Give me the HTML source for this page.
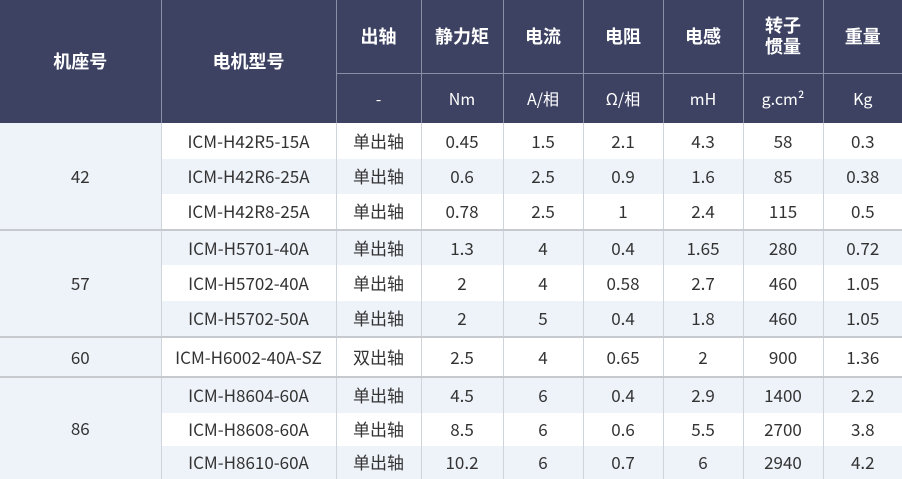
<!DOCTYPE html>
<html><head><meta charset="utf-8"><style>
body{margin:0;width:902px;height:478px;overflow:hidden;background:#fff;font-family:"Noto Sans CJK SC","Liberation Sans",sans-serif;}
table{border-collapse:collapse;table-layout:fixed;width:902px;}
td,th{padding:0;text-align:center;vertical-align:middle;}
th{background:#3d4263;color:#fff;font-weight:bold;font-size:18px;border-left:1px solid #8a8fa6;border-bottom:1px solid #8a8fa6;}
th.s{font-weight:normal;font-size:16px;height:49px;}
th.first{border-left:none}
td{font-size:17px;color:#333;border-left:1px solid #cfd3da;line-height:20px;overflow:hidden;}
tr.g td{background:#eef2f9}
td.grp{background:#eef2f9 !important;border-left:none}
tr.top td{border-top:2px solid #c6c9ce;}
</style></head><body>
<table>
<colgroup><col style="width:161px"><col style="width:175px"><col style="width:85px"><col style="width:82px"><col style="width:80px"><col style="width:80px"><col style="width:80px"><col style="width:80px"><col style="width:79px"></colgroup>
<tr style="height:73px"><th rowspan="2" class="first" style="border-bottom:none">机座号</th><th rowspan="2" style="border-bottom:none">电机型号</th><th>出轴</th><th>静力矩</th><th>电流</th><th>电阻</th><th>电感</th><th style="line-height:21px">转子<br>惯量</th><th>重量</th></tr>
<tr><th class="s" style="border-bottom:none">-</th><th class="s" style="border-bottom:none">Nm</th><th class="s" style="border-bottom:none">A/相</th><th class="s" style="border-bottom:none">Ω/相</th><th class="s" style="border-bottom:none">mH</th><th class="s" style="border-bottom:none">g.cm²</th><th class="s" style="border-bottom:none">Kg</th></tr>
<tr style="height:36px"><td rowspan="3" class="grp">42</td><td>ICM-H42R5-15A</td><td>单出轴</td><td>0.45</td><td>1.5</td><td>2.1</td><td>4.3</td><td>58</td><td>0.3</td></tr>
<tr class="g" style="height:35px"><td>ICM-H42R6-25A</td><td>单出轴</td><td>0.6</td><td>2.5</td><td>0.9</td><td>1.6</td><td>85</td><td>0.38</td></tr>
<tr style="height:36px"><td>ICM-H42R8-25A</td><td>单出轴</td><td>0.78</td><td>2.5</td><td>1</td><td>2.4</td><td>115</td><td>0.5</td></tr>
<tr class="g top" style="height:35px"><td rowspan="3" class="grp">57</td><td>ICM-H5701-40A</td><td>单出轴</td><td>1.3</td><td>4</td><td>0.4</td><td>1.65</td><td>280</td><td>0.72</td></tr>
<tr style="height:36px"><td>ICM-H5702-40A</td><td>单出轴</td><td>2</td><td>4</td><td>0.58</td><td>2.7</td><td>460</td><td>1.05</td></tr>
<tr class="g" style="height:36px"><td>ICM-H5702-50A</td><td>单出轴</td><td>2</td><td>5</td><td>0.4</td><td>1.8</td><td>460</td><td>1.05</td></tr>
<tr class="top" style="height:40px"><td class="grp">60</td><td>ICM-H6002-40A-SZ</td><td>双出轴</td><td>2.5</td><td>4</td><td>0.65</td><td>2</td><td>900</td><td>1.36</td></tr>
<tr class="g top" style="height:36px"><td rowspan="3" class="grp">86</td><td>ICM-H8604-60A</td><td>单出轴</td><td>4.5</td><td>6</td><td>0.4</td><td>2.9</td><td>1400</td><td>2.2</td></tr>
<tr style="height:33px"><td>ICM-H8608-60A</td><td>单出轴</td><td>8.5</td><td>6</td><td>0.6</td><td>5.5</td><td>2700</td><td>3.8</td></tr>
<tr class="g" style="height:33px"><td>ICM-H8610-60A</td><td>单出轴</td><td>10.2</td><td>6</td><td>0.7</td><td>6</td><td>2940</td><td>4.2</td></tr>
</table>
</body></html>
